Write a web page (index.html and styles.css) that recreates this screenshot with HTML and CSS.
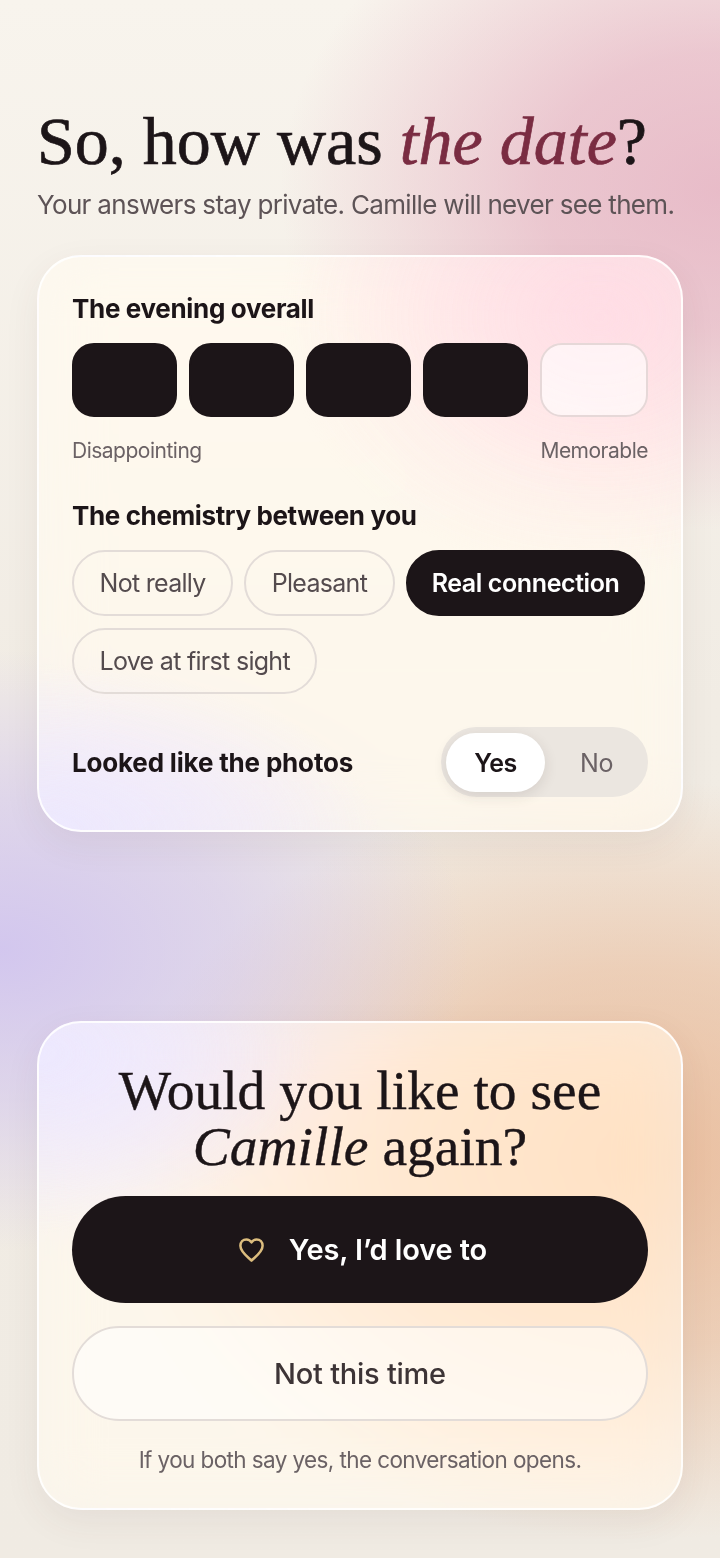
FILE: index.html
```html
<!DOCTYPE html>
<html lang="en">
<head>
<meta charset="utf-8">
<title>Date feedback</title>
<link rel="stylesheet" href="styles.css">
</head>
<body>
<div class="glow" aria-hidden="true"></div>
<main class="page">
  <header class="head">
    <h1 class="title">So, how was <em class="accent">the date</em>?</h1>
    <p class="sub">Your answers stay private. Camille will never see them.</p>
  </header>
  <section class="card card-one">
    <h2 class="label">The evening overall</h2>
    <div class="rating">
      <span class="cell on"></span><span class="cell on"></span><span class="cell on"></span><span class="cell on"></span><span class="cell"></span>
    </div>
    <div class="ends"><span>Disappointing</span><span>Memorable</span></div>
    <h2 class="label label-two">The chemistry between you</h2>
    <div class="chips">
      <span class="chip">Not really</span>
      <span class="chip">Pleasant</span>
      <span class="chip chip-on">Real connection</span>
      <span class="chip">Love at first sight</span>
    </div>
    <div class="row">
      <h2 class="label label-row">Looked like the photos</h2>
      <div class="toggle"><span class="opt opt-on">Yes</span><span class="opt">No</span></div>
    </div>
  </section>
  <section class="card card-two">
    <h2 class="ask">Would you like to see<br><em>Camille</em> again?</h2>
    <button class="btn btn-main">
      <svg class="heart" viewBox="0 0 25 24" width="25" height="24" fill="none" stroke="#dcbd7e" stroke-width="2.5" stroke-linejoin="round"><path d="M12.5 22.6 C9 19 1.4 14.2 1.4 7.8 C1.4 4 4 1.4 7.4 1.4 C9.6 1.4 11.4 2.6 12.5 4.4 C13.6 2.6 15.4 1.4 17.6 1.4 C21 1.4 23.6 4 23.6 7.8 C23.6 14.2 16 19 12.5 22.6 Z"/></svg>
      Yes, I’d love to
    </button>
    <button class="btn btn-alt">Not this time</button>
    <p class="foot">If you both say yes, the conversation opens.</p>
  </section>
</main>
</body>
</html>
```
FILE: styles.css
```css
* { box-sizing: border-box; }
html, body { margin: 0; padding: 0; }
body {
  width: 720px;
  height: 1558px;
  overflow: hidden;
  position: relative;
  background: #f1ece5;
  font-family: "Inter", "Liberation Sans", sans-serif;
  color: #1c1518;
}
.glow {
  position: absolute;
  inset: 0;
  background:
    radial-gradient(ellipse 440px 340px at 720px 190px, rgba(226,165,186,.7) 0%, rgba(226,165,186,.56) 40%, rgba(226,165,186,0) 100%),
    radial-gradient(ellipse 470px 300px at 0px 950px, rgba(205,192,240,.85) 0%, rgba(205,192,240,.5) 50%, rgba(205,192,240,0) 100%),
    radial-gradient(ellipse 520px 380px at 640px 1160px, rgba(232,178,140,.8) 0%, rgba(232,178,140,.5) 50%, rgba(232,178,140,0) 100%),
    linear-gradient(180deg, #f8f4ed 0%, #f1ece4 45%, #f0ebe3 100%);
}
.page {
  position: relative;
  padding: 105px 37px 0;
}
.head { height: 150px; }
.title {
  margin: 0;
  font: 400 68px/72px "Liberation Serif", serif;
  -webkit-text-stroke: .7px currentColor;
  color: #1c1518;
}
.accent { color: #7a2c42; font-style: italic; }
.sub {
  margin: 10px 0 0;
  font-size: 26px;
  line-height: 36px;
  letter-spacing: -.68px;
  white-space: nowrap;
  color: #5d5356;
}
.card {
  border: 2px solid rgba(255,255,255,.85);
  border-radius: 44px;
  padding: 34px 33px 0;
  -webkit-backdrop-filter: blur(30px) saturate(1.8) brightness(1.02);
  backdrop-filter: blur(30px) saturate(1.8) brightness(1.02);
  box-shadow: 0 12px 36px rgba(90,60,60,.07);
}
.card-one {
  height: 577px;
  background:
    radial-gradient(ellipse 320px 260px at 560px 60px, rgba(255,214,228,.55) 0%, rgba(255,214,228,0) 100%),
    radial-gradient(ellipse 340px 170px at 0 577px, rgba(236,232,255,.95) 0%, rgba(236,232,255,0) 100%),
    rgba(255,251,243,.58);
}
.card-two {
  margin-top: 189px;
  height: 489px;
  padding-top: 40px;
  background:
    radial-gradient(ellipse 280px 180px at 0 30px, rgba(236,232,255,.9) 0%, rgba(236,232,255,0) 100%),
    rgba(255,251,243,.58);
}
.label {
  margin: 0;
  font-size: 26px;
  line-height: 36px;
  font-weight: 650;
  letter-spacing: -.33px;
}
.label-two { margin-top: 31px; letter-spacing: -.38px; }
.label-row { padding-top: 1px; letter-spacing: -.18px; }
.rating { display: flex; gap: 12px; margin-top: 16px; }
.cell {
  flex: 1;
  height: 74px;
  border-radius: 22px;
  background: rgba(255,255,255,.6);
  border: 2px solid #e6d8d8;
}
.cell.on { flex: 0 0 105px; background: #1c1518; border-color: #1c1518; }
.ends {
  display: flex;
  justify-content: space-between;
  margin-top: 18px;
  font-size: 21px;
  line-height: 32px;
  letter-spacing: -.5px;
  color: #6b6265;
}
.chips { display: flex; flex-wrap: wrap; gap: 12px 11px; margin-top: 16px; }
.chip {
  height: 66px;
  padding: 0 25.5px;
  display: flex;
  align-items: center;
  border: 2px solid #e3dcd8;
  border-radius: 33px;
  font-size: 25px;
  letter-spacing: -.7px;
  color: #544b4e;
}
.chip-on { padding: 0 24px; letter-spacing: -.4px; background: #1c1518; border-color: #1c1518; color: #fff; font-weight: 600; }
.row { display: flex; align-items: center; justify-content: space-between; margin-top: 33px; }
.toggle {
  width: 207px;
  height: 70px;
  padding: 6px 0 5px 5px;
  display: flex;
  border-radius: 35px;
  background: #ebe6e0;
}
.opt {
  width: 99px;
  display: flex;
  align-items: center;
  justify-content: center;
  border-radius: 30px;
  font-size: 25px;
  letter-spacing: -.5px;
  color: #6b6265;
}
.opt + .opt { flex: 1; }
.opt-on {
  background: #fff;
  color: #1c1518;
  font-weight: 600;
  box-shadow: 0 4px 14px rgba(60,40,40,.12);
}
.ask {
  margin: 0;
  text-align: center;
  font: 400 55.5px/56px "Liberation Serif", serif;
  -webkit-text-stroke: .4px currentColor;
}
.btn {
  display: flex;
  align-items: center;
  justify-content: center;
  width: 100%;
  border-radius: 54px;
  font-family: inherit;
  font-size: 29px;
  font-weight: 600;
  letter-spacing: -.12px;
}
.btn-main {
  height: 107px;
  margin-top: 21px;
  padding: 0 0 0 6px;
  gap: 25px;
  color: #fff;
  background: #1c1518;
  border: 0;
}
.btn-alt {
  height: 95px;
  margin-top: 23px;
  font-weight: 550;
  letter-spacing: -.25px;
  color: #3d3436;
  background: rgba(255,255,255,.55);
  border: 2px solid #e3dcd8;
}
.foot {
  margin: 22px 0 0;
  text-align: center;
  font-size: 22.5px;
  line-height: 34px;
  letter-spacing: -.6px;
  color: #6b6265;
}
```
